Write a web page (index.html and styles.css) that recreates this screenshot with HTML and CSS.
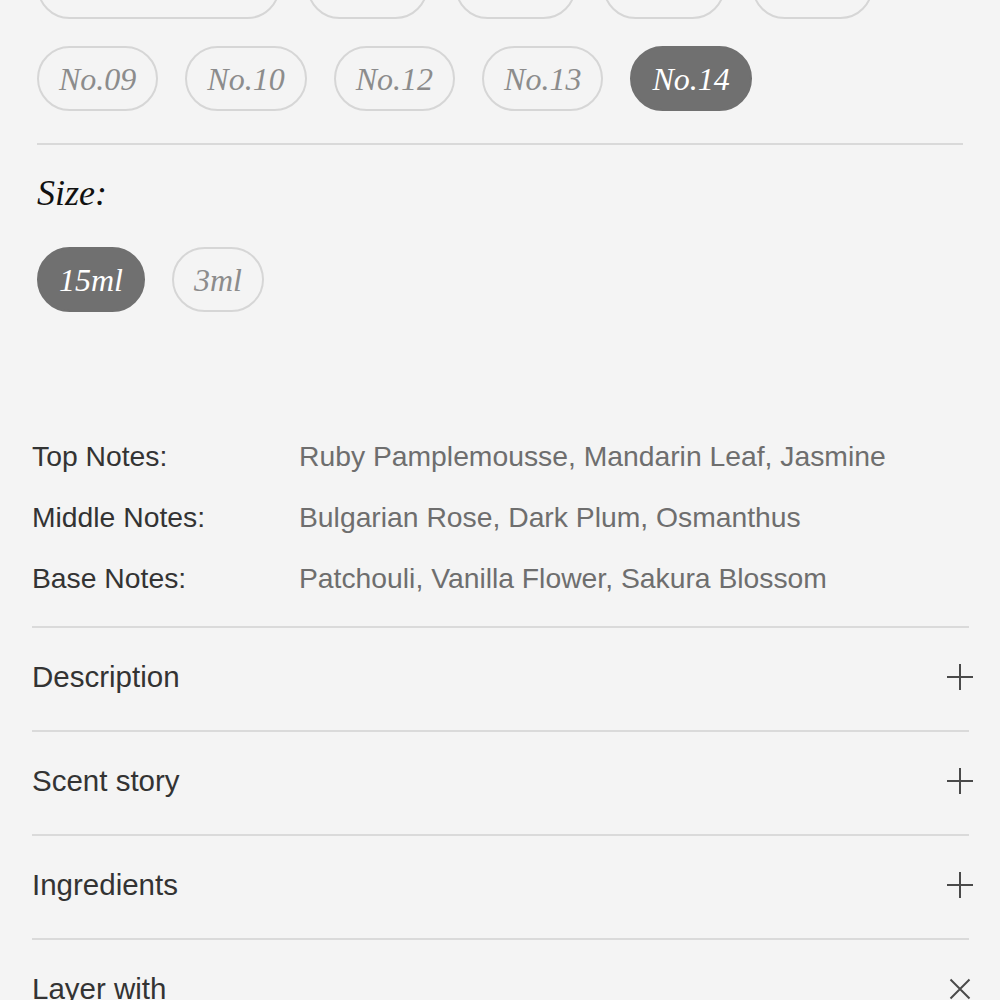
FILE: index.html
```html
<!DOCTYPE html>
<html lang="en">
<head>
<meta charset="utf-8">
<title>Product options</title>
<link rel="stylesheet" href="styles.css">
</head>
<body>
<main class="page">
  <section class="options">
    <div class="pill-row">
      <button class="pill pill-wide">Full Collection</button>
      <button class="pill">No.03</button>
      <button class="pill">No.05</button>
      <button class="pill">No.07</button>
      <button class="pill">No.08</button>
      <button class="pill">No.09</button>
      <button class="pill">No.10</button>
      <button class="pill">No.12</button>
      <button class="pill">No.13</button>
      <button class="pill is-selected">No.14</button>
    </div>
    <hr class="rule">
    <h3 class="size-label">Size:</h3>
    <div class="pill-row">
      <button class="pill is-selected">15ml</button>
      <button class="pill">3ml</button>
    </div>
  </section>

  <section class="details">
    <dl class="notes">
      <dt>Top Notes:</dt>
      <dd>Ruby Pamplemousse, Mandarin Leaf, Jasmine</dd>
      <dt>Middle Notes:</dt>
      <dd>Bulgarian Rose, Dark Plum, Osmanthus</dd>
      <dt>Base Notes:</dt>
      <dd>Patchouli, Vanilla Flower, Sakura Blossom</dd>
    </dl>

    <div class="accordion">
      <div class="acc-item">
        <span class="acc-title">Description</span>
        <svg class="acc-icon" viewBox="0 0 26 26" aria-hidden="true"><path d="M13 0V26M0 13H26"/></svg>
      </div>
      <div class="acc-item">
        <span class="acc-title">Scent story</span>
        <svg class="acc-icon" viewBox="0 0 26 26" aria-hidden="true"><path d="M13 0V26M0 13H26"/></svg>
      </div>
      <div class="acc-item">
        <span class="acc-title">Ingredients</span>
        <svg class="acc-icon" viewBox="0 0 26 26" aria-hidden="true"><path d="M13 0V26M0 13H26"/></svg>
      </div>
      <div class="acc-item">
        <span class="acc-title">Layer with</span>
        <svg class="acc-icon" viewBox="0 0 26 26" aria-hidden="true"><path d="M3.5 3.5L22.5 22.5M22.5 3.5L3.5 22.5"/></svg>
      </div>
    </div>
  </section>
</main>
</body>
</html>
```

FILE: styles.css
```css
* { box-sizing: border-box; }

html, body {
  margin: 0;
  padding: 0;
  background: #f4f4f4;
}

body {
  font-family: "Liberation Sans", Arial, sans-serif;
  color: #333;
  overflow: hidden;
}

.page {
  width: 1000px;
}

.options {
  padding: 0 37px;
  margin-top: -46px;
}

.pill-row {
  display: flex;
  flex-wrap: wrap;
  gap: 27px;
}

.pill {
  display: inline-flex;
  align-items: center;
  justify-content: center;
  height: 65px;
  padding: 0 20px;
  border: 2px solid #d6d6d6;
  border-radius: 33px;
  background: transparent;
  font-family: "Liberation Serif", "Times New Roman", serif;
  font-style: italic;
  font-size: 32px;
  line-height: 1;
  color: #8c8c8c;
  cursor: pointer;
}

.pill-wide {
  padding: 0 22px;
}

.pill.is-selected {
  background: #707070;
  border-color: #707070;
  color: #ffffff;
}

.rule {
  margin: 32px 0 0;
  border: 0;
  height: 2px;
  background: #d9d9d9;
}

.size-label {
  margin: 30px 0 36px;
  font-family: "Liberation Serif", "Times New Roman", serif;
  font-style: italic;
  font-weight: normal;
  font-size: 36px;
  line-height: 36px;
  color: #111;
}

.details {
  padding: 0 31px 0 32px;
  margin-top: 124px;
}

.notes {
  display: grid;
  grid-template-columns: 267px 1fr;
  row-gap: 21px;
  margin: 0;
  font-size: 28.3px;
  line-height: 40px;
}

.notes dt {
  color: #333;
}

.notes dd {
  margin: 0;
  color: #6e6e6e;
}

.accordion {
  margin-top: 28px;
}

.acc-item {
  display: flex;
  align-items: center;
  justify-content: space-between;
  border-top: 2px solid #dadada;
  padding: 29px 0 33px;
  font-size: 29.5px;
  line-height: 40px;
  color: #333;
}

.acc-icon {
  width: 26px;
  height: 26px;
  margin-right: -4px;
  fill: none;
  stroke: #4a4a4a;
  stroke-width: 2;
}
```
